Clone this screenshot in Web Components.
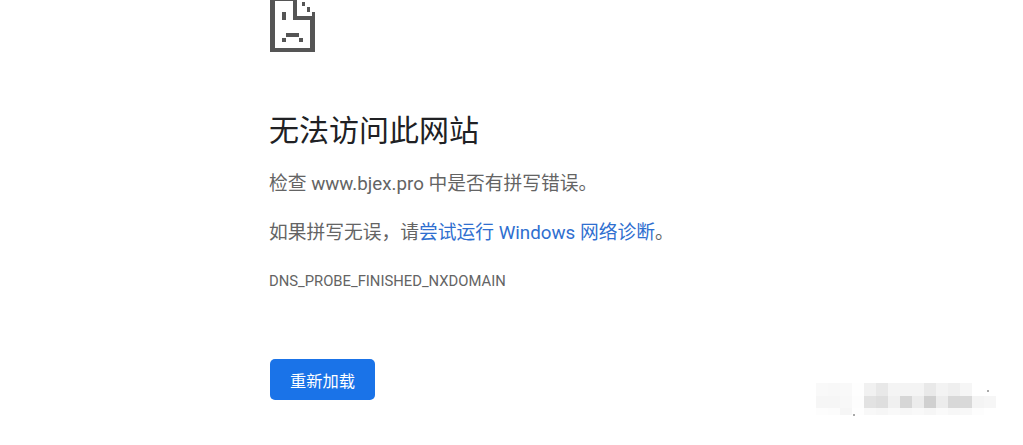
<!DOCTYPE html>
<html lang="zh-CN"><head><meta charset="utf-8"><style>
html,body{margin:0;background:#fff;height:100%;overflow:hidden}
</style></head><body>
<error-page>
<span slot="title">无法访问此网站</span>
<span slot="check">检查 www.bjex.pro 中是否有拼写错误。</span>
<span slot="hint">如果拼写无误，请<a href="#" style="color:#2f6fd0;text-decoration:none">尝试运行 Windows 网络诊断</a>。</span>
<span slot="code">DNS_PROBE_FINISHED_NXDOMAIN</span>
<span slot="button">重新加载</span>
</error-page>
<mosaic-mark></mosaic-mark>
<script>
class SadTab extends HTMLElement{constructor(){super();this.attachShadow({mode:'open'}).innerHTML=`<style>:host{display:block;width:45px;height:52px}svg{display:block}</style>
<svg width="45" height="52" viewBox="0 0 45 52" fill="#555">
<path d="M0 0H27V16H40V20H23V1H5V48H40V16H45V52H0Z"/>
<path d="M32 2h3v4h-3zM37 7h3v5h-3zM42 12h3v4h-3z"/>
<rect x="12" y="12" width="4" height="8"/>
<rect x="16" y="33" width="13" height="4"/>
<rect x="12" y="38" width="4" height="4"/><rect x="29" y="38" width="4" height="4"/>
</svg>`}}
customElements.define('sad-tab',SadTab);
class ReloadButton extends HTMLElement{constructor(){super();this.attachShadow({mode:'open'}).innerHTML=`<style>:host{display:inline-flex;align-items:center;justify-content:center;box-sizing:border-box;width:105px;height:41px;background:#1a73e8;color:#fff;border-radius:5px;font-size:16.25px}</style><slot></slot>`}}
customElements.define('reload-button',ReloadButton);
class ErrorPage extends HTMLElement{constructor(){super();this.attachShadow({mode:'open'}).innerHTML=`<style>
:host{display:block;box-sizing:border-box;padding-left:270px;font-family:Roboto,"Noto Sans CJK SC",sans-serif;color:#646464}
h1{margin:61px 0 0 -1px;font-size:30px;font-weight:400;line-height:36px;color:#202124}
p{margin:0;font-size:18.75px;line-height:26px}
.a{margin:22px 0 0 -1px}.b{margin:23px 0 0 -1px}
.c{margin:25px 0 0 -1px;font-size:14.8px;line-height:20px}
.btn{margin-top:68px}
</style>
<sad-tab></sad-tab>
<h1><slot name="title"></slot></h1>
<p class="a"><slot name="check"></slot></p>
<p class="b"><slot name="hint"></slot></p>
<p class="c"><slot name="code"></slot></p>
<div class="btn"><reload-button><slot name="button"></slot></reload-button></div>`}}
customElements.define('error-page',ErrorPage);
class MosaicMark extends HTMLElement{constructor(){super();
const rows=[
['#f9f9f9','#f8f8f8','#f9f9f9','#fefefe','#f1f1f1','#e8e8e8','#f4f4f4','#f4f4f4','#f4f4f4','#e9e9e9','#f3f3f3','#efefef','#f6f6f6','#fff','#fff'],
['#f6f6f6','#f6f6f6','#f8f8f8','#fdfdfd','#e2e2e2','#dedede','#f0f0f0','#d6d6d6','#ececec','#d0d0d0','#ececec','#d8d8d8','#d9d9d9','#f4f4f4','#f6f6f6'],
['#fdfdfd','#fcfcfc','#f6f6f6','#fefefe','#f8f8f8','#f6f6f6','#f9f9f9','#f7f7f7','#f9f9f9','#f6f6f6','#fafafa','#f7f7f7','#f8f8f8','#fdfdfd','#fff']];
this.attachShadow({mode:'open'}).innerHTML=`<style>:host{position:absolute;left:816px;top:383px;display:grid;grid-template-columns:repeat(15,12px);grid-template-rows:13px 12px 7px}
b{position:absolute;width:2px;height:2px;background:#aaa}</style>`+rows.flat().map(c=>`<i style="background:${c}"></i>`).join('')+`<b style="left:171px;top:7px"></b><b style="left:37px;top:31px"></b>`}}
customElements.define('mosaic-mark',MosaicMark);
</script>
</body></html>
